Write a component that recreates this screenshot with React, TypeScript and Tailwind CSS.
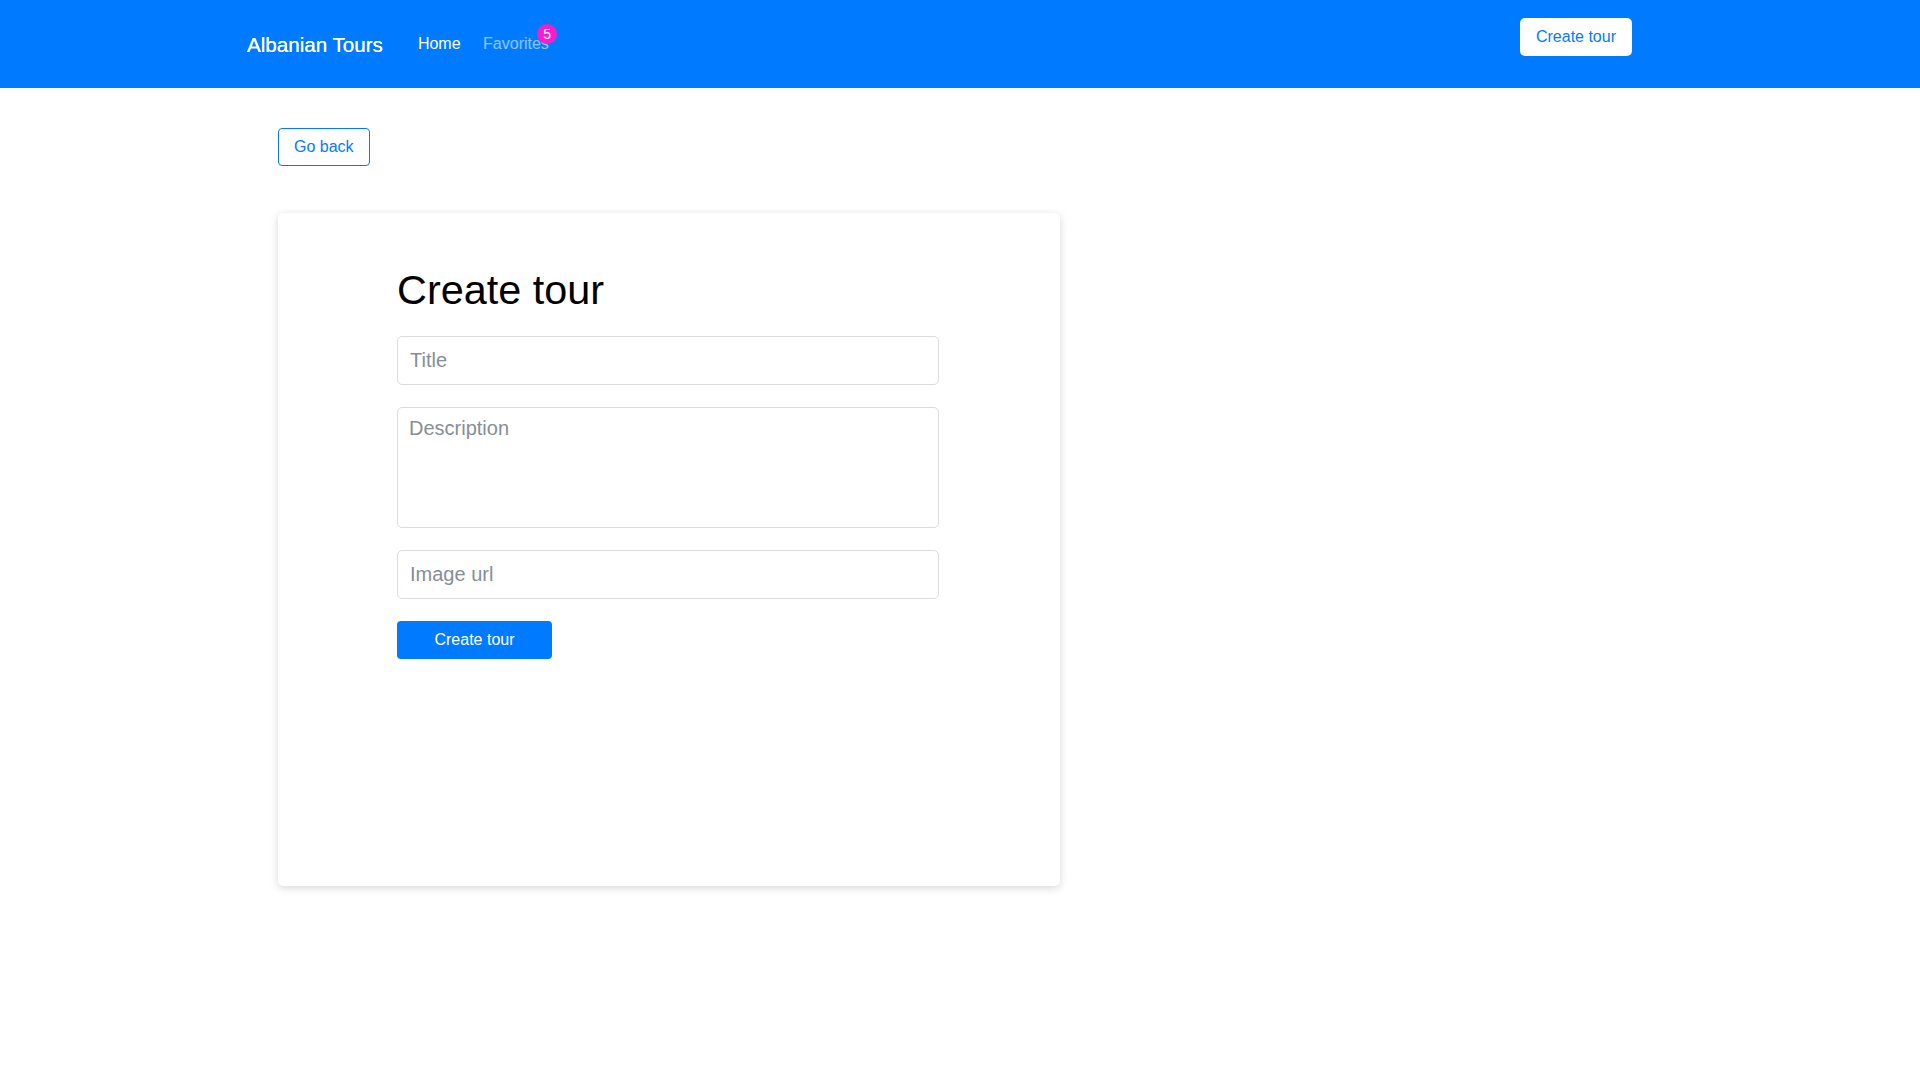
import React from "react";

export default function App() {
  return (
    <div className="min-h-screen w-full bg-white font-['Liberation_Sans',Arial,Helvetica,sans-serif] text-black">
      <nav className="flex h-[88px] w-full items-start bg-[#007bff] pl-[247px] pr-[288px]">
        <a className="mt-[33px] block text-[20.6px] leading-6 text-white [text-shadow:0_0_0.4px_#fff]" href="#">
          Albanian Tours
        </a>
        <ul className="ml-[35px] mt-[31.5px] flex gap-[22.5px] text-[16px] leading-6">
          <li>
            <a className="text-white" href="#">
              Home
            </a>
          </li>
          <li className="relative">
            <a className="text-white/55" href="#">
              Favorites
            </a>
            <span className="absolute left-[54px] top-[-8px] flex h-[20px] w-[20px] items-center justify-center rounded-full bg-[#f81ccf] text-[14px] font-medium leading-none text-white">
              5
            </span>
          </li>
        </ul>
        <button className="ml-auto mt-[18px] h-[38px] rounded-[5px] bg-white px-4 text-[16px] leading-6 text-[#007bff]">
          Create tour
        </button>
      </nav>

      <main className="pl-[278px] pt-[40px]">
        <button className="h-[38px] rounded-[4px] border border-[#007bff] bg-white px-[15px] text-[16px] leading-6 text-[#007bff]">
          Go back
        </button>

        <div className="mt-[47px] h-[673px] w-[782px] rounded-[5px] bg-white pl-[119px] pr-[121px] pt-[52.5px] shadow-[0_2px_8px_rgba(0,0,0,0.16)]">
          <h1 className="text-[41.4px] leading-[48px] font-normal">Create tour</h1>
          <form className="mt-[22px] flex flex-col gap-[22px]" onSubmit={(e) => e.preventDefault()}>
            <input
              type="text"
              placeholder="Title"
              className="h-[49px] w-full rounded-[5px] border border-[#dcdcdc] px-3 text-[20px] leading-6 text-[#495057] outline-none placeholder:text-[#868e96]"
            />
            <textarea
              placeholder="Description"
              className="h-[121px] w-full resize-none rounded-[5px] border border-[#dcdcdc] px-[11px] pt-2 text-[20px] leading-6 text-[#495057] outline-none placeholder:text-[#868e96]"
            />
            <input
              type="text"
              placeholder="Image url"
              className="h-[49px] w-full rounded-[5px] border border-[#dcdcdc] px-3 text-[20px] leading-6 text-[#495057] outline-none placeholder:text-[#868e96]"
            />
            <button
              type="submit"
              className="h-[38px] w-[155px] rounded-[4px] bg-[#007bff] text-[16px] leading-6 text-white"
            >
              Create tour
            </button>
          </form>
        </div>
      </main>
    </div>
  );
}
